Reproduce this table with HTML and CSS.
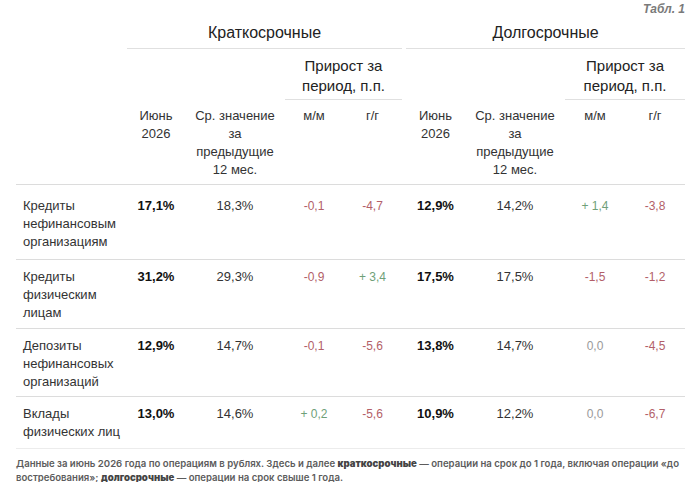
FILE: index.html
```html
<!DOCTYPE html>
<html lang="ru">
<head>
<meta charset="utf-8">
<link rel="stylesheet" href="styles.css">
</head>
<body>
<div class="page">
  <div class="tab-label">Табл. 1</div>
  <table class="rates">
    <colgroup>
      <col class="c-label">
      <col class="c-now">
      <col class="c-avg">
      <col class="c-mm">
      <col class="c-yy">
      <col class="c-gap">
      <col class="c-now2">
      <col class="c-avg">
      <col class="c-mm2">
      <col class="c-yy2">
    </colgroup>
    <thead>
      <tr class="h-group">
        <th></th>
        <th colspan="4" class="group">Краткосрочные</th>
        <th></th>
        <th colspan="4" class="group">Долгосрочные</th>
      </tr>
      <tr class="h-growth">
        <th></th><th></th><th></th>
        <th colspan="2" class="growth">Прирост за<br>период, п.п.</th>
        <th></th><th></th><th></th>
        <th colspan="2" class="growth">Прирост за<br>период, п.п.</th>
      </tr>
      <tr class="h-sub">
        <th></th>
        <th>Июнь<br>2026</th>
        <th>Ср. значение<br>за<br>предыдущие<br>12 мес.</th>
        <th>м/м</th>
        <th>г/г</th>
        <th></th>
        <th>Июнь<br>2026</th>
        <th>Ср. значение<br>за<br>предыдущие<br>12 мес.</th>
        <th>м/м</th>
        <th>г/г</th>
      </tr>
    </thead>
    <tbody>
      <tr class="first">
        <td class="label">Кредиты<br>нефинансовым<br>организациям</td>
        <td class="now">17,1%</td><td class="avg">18,3%</td>
        <td class="neg">-0,1</td><td class="neg">-4,7</td>
        <td></td>
        <td class="now">12,9%</td><td class="avg">14,2%</td>
        <td class="pos">+ 1,4</td><td class="neg">-3,8</td>
      </tr>
      <tr class="second">
        <td class="label">Кредиты<br>физическим<br>лицам</td>
        <td class="now">31,2%</td><td class="avg">29,3%</td>
        <td class="neg">-0,9</td><td class="pos">+ 3,4</td>
        <td></td>
        <td class="now">17,5%</td><td class="avg">17,5%</td>
        <td class="neg">-1,5</td><td class="neg">-1,2</td>
      </tr>
      <tr>
        <td class="label">Депозиты<br>нефинансовых<br>организаций</td>
        <td class="now">12,9%</td><td class="avg">14,7%</td>
        <td class="neg">-0,1</td><td class="neg">-5,6</td>
        <td></td>
        <td class="now">13,8%</td><td class="avg">14,7%</td>
        <td class="zero">0,0</td><td class="neg">-4,5</td>
      </tr>
      <tr class="last">
        <td class="label">Вклады<br>физических лиц</td>
        <td class="now">13,0%</td><td class="avg">14,6%</td>
        <td class="pos">+ 0,2</td><td class="neg">-5,6</td>
        <td></td>
        <td class="now">10,9%</td><td class="avg">12,2%</td>
        <td class="zero">0,0</td><td class="neg">-6,7</td>
      </tr>
    </tbody>
  </table>
  <p class="note">Данные за июнь 2026 года по операциям в рублях. Здесь и далее <b>краткосрочные</b> — операции на срок до 1 года, включая операции «до востребования»; <b>долгосрочные</b> — операции на срок свыше 1 года.</p>
</div>
</body>
</html>
```
FILE: styles.css
```css
html, body {
  margin: 0;
  padding: 0;
  background: #ffffff;
}

.page {
  width: 669px;
  padding: 0 10px 0 16px;
  font-family: "Liberation Sans", Arial, sans-serif;
  color: #333;
}

.tab-label {
  text-align: right;
  font-size: 12px;
  line-height: 18px;
  font-weight: bold;
  font-style: italic;
  color: #7a7a7a;
}

.rates {
  width: 669px;
  table-layout: fixed;
  border-collapse: collapse;
  border-spacing: 0;
}

.c-label { width: 111px; }
.c-now { width: 58px; }
.c-avg { width: 100px; }
.c-mm { width: 58px; }
.c-yy { width: 59px; }
.c-gap { width: 4px; }
.c-now2 { width: 59px; }
.c-mm2 { width: 60px; }
.c-yy2 { width: 60px; }

.rates th,
.rates td {
  padding: 0;
  text-align: center;
  vertical-align: top;
}

.rates th {
  font-weight: normal;
  color: #222;
}

.h-group th {
  font-size: 16px;
  line-height: 20px;
  padding: 5px 0 5px;
}

.h-group th.group {
  border-bottom: 1px solid #e0e0e0;
}

.h-growth th {
  font-size: 15px;
  line-height: 20px;
  padding: 7px 0 3px;
}

.h-growth th.growth {
  border-bottom: 1px solid #e0e0e0;
}

.h-sub th {
  font-size: 13px;
  line-height: 18px;
  padding: 7px 0 5px;
  color: #333;
  border-bottom: 1px solid #dcdcdc;
}

.rates tbody td {
  font-size: 13px;
  line-height: 18px;
  padding: 8px 0 5px;
  border-bottom: 1px solid #dcdcdc;
}

.rates tbody tr.first td {
  padding-top: 12px;
  padding-bottom: 8px;
}

.rates tbody tr.second td {
  padding-bottom: 6px;
}

.rates tbody tr.last td {
  padding-bottom: 7px;
  border-bottom-color: #ececec;
}

.rates td.label {
  text-align: left;
  padding-left: 7px;
  color: #333;
}

.rates td.now {
  font-weight: bold;
  color: #111;
}

.rates td.avg {
  color: #333;
}

.rates td.neg,
.rates td.pos,
.rates td.zero {
  font-size: 12px;
}

.rates td.neg { color: #b35f69; }
.rates td.pos { color: #6f9f79; }
.rates td.zero { color: #9a9a9a; }

.note {
  margin: 8px 0 0;
  font-family: Inter, "Noto Sans", sans-serif;
  font-size: 9.6px;
  line-height: 14px;
  font-weight: 600;
  color: #5c5c5c;
}

.note b {
  font-weight: 900;
  color: #444;
}
```
